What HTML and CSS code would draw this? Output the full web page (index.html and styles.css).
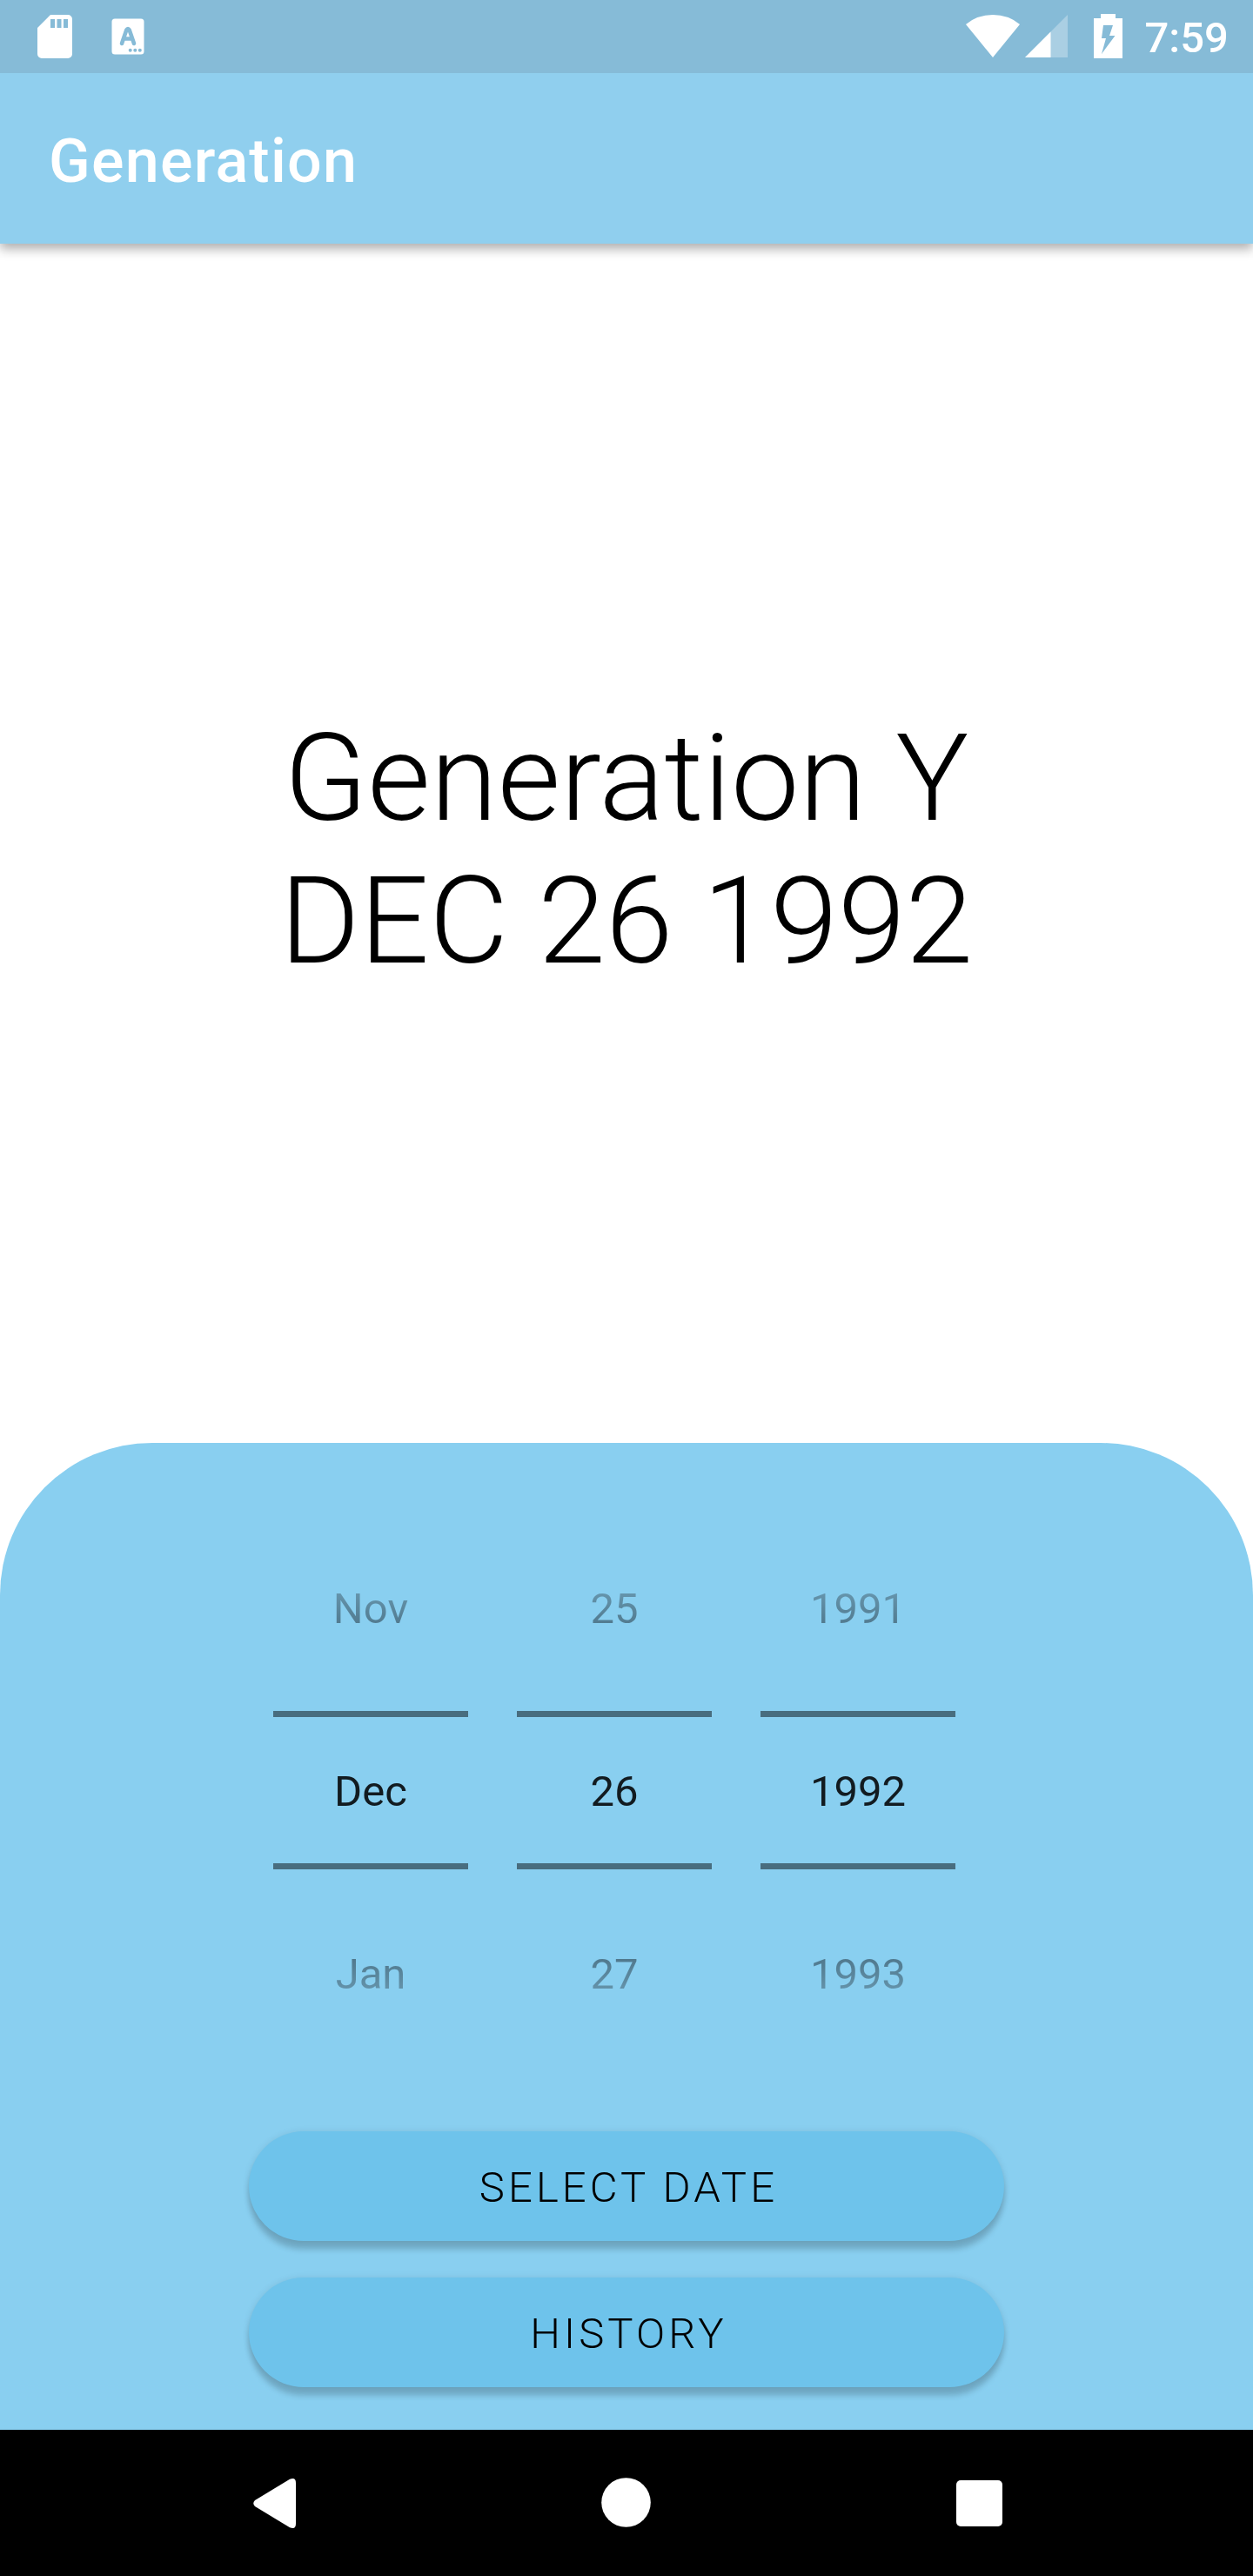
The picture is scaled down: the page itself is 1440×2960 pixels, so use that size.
FILE: index.html
```html
<!DOCTYPE html>
<html lang="en">
<head>
<meta charset="utf-8">
<title>Generation</title>
<link rel="stylesheet" href="styles.css">
</head>
<body>
<div class="screen">
  <header class="top">
    <div class="status">
      <svg class="status-left" width="200" height="84" viewBox="0 0 200 84" fill="#fff">
        <path fill-rule="evenodd" d="M58 17H78a5 5 0 0 1 5 5V62a5 5 0 0 1-5 5H48a5 5 0 0 1-5-5V32ZM58 22V32H63V22ZM65.500 22V32H70.500V22ZM73 22V32H78V22Z"/>
        <rect x="128.500" y="21.500" width="37" height="41" rx="3.500"/>
        <path d="M140 50L145.300 34.500Q147 31.500 148.700 34.500L154 50M142.500 44.500H151.500" fill="none" stroke="#86bbd7" stroke-width="4.600" stroke-linecap="round" stroke-linejoin="round"/>
        <g fill="#86bbd7"><circle cx="149.700" cy="57.700" r="2"/><circle cx="155.300" cy="57.700" r="2"/><circle cx="160.800" cy="57.700" r="2"/></g>
      </svg>
      <svg class="status-right" width="200" height="84" viewBox="1100 0 200 84" fill="#fff">
        <path d="M1110 28Q1123 17 1141 17T1172 28L1141 66Z"/>
        <path d="M1227 17V66H1178Z" opacity=".3"/>
        <path d="M1207.500 36.500V66H1178Z"/>
        <path fill-rule="evenodd" d="M1265 16H1282V21H1290V67H1257V21H1265ZM1268 29L1266 44H1271L1266 62L1281.500 41H1275L1279 29Z"/>
      </svg>
      <span class="clock">7:59</span>
    </div>
    <div class="appbar"><h1 class="title">Generation</h1></div>
  </header>
  <main class="result">
    <p class="result-text">Generation Y<br>DEC 26 1992</p>
  </main>
  <section class="panel">
    <div class="picker">
      <div class="wheel">
        <span class="item before">Nov</span><span class="item current">Dec</span><span class="item after">Jan</span>
      </div>
      <div class="wheel">
        <span class="item before">25</span><span class="item current">26</span><span class="item after">27</span>
      </div>
      <div class="wheel">
        <span class="item before">1991</span><span class="item current">1992</span><span class="item after">1993</span>
      </div>
    </div>
    <div class="actions">
      <button class="btn" type="button">SELECT DATE</button>
      <button class="btn" type="button">HISTORY</button>
    </div>
  </section>
  <nav class="navbar">
    <svg width="1440" height="168" viewBox="0 2792 1440 168" fill="#fff">
      <path d="M293 2873L333 2848.800Q340 2846 340 2853V2900Q340 2907 333 2904.200L293 2880Q289.500 2876.500 293 2873Z"/>
      <circle cx="719.500" cy="2875.500" r="28.300"/>
      <rect x="1099" y="2850" width="53" height="53" rx="5"/>
    </svg>
  </nav>
</div>
</body>
</html>
```
FILE: styles.css
```css
* { box-sizing: border-box; }
body {
  margin: 0;
  background: #fff;
  font-family: Roboto, "Liberation Sans", sans-serif;
}
.screen {
  width: 1440px;
  height: 2960px;
  display: flex;
  flex-direction: column;
  overflow: hidden;
}
.top {
  flex: none;
  background: #90cfee;
  box-shadow: 0 6px 12px rgba(0, 0, 0, .32);
}
.status {
  height: 84px;
  background: #86bbd7;
  display: flex;
  align-items: center;
}
.status-right { margin-left: auto; }
.clock {
  width: 140px;
  padding: 3px 0 0 15.5px;
  font-size: 49px;
  font-weight: 500;
  line-height: 58px;
  color: #fff;
}
.appbar {
  height: 196px;
  padding-left: 56px;
  display: flex;
  align-items: center;
}
.title {
  margin: 5px 0 0;
  font-size: 70px;
  font-weight: 500;
  line-height: 82px;
  letter-spacing: 1.25px;
  color: #fff;
}
.result {
  flex: 1;
  padding-top: 14px;
  display: flex;
  align-items: center;
  justify-content: center;
}
.result-text {
  margin: 0;
  text-align: center;
  font-size: 140px;
  font-weight: 300;
  line-height: 164px;
  color: #000;
}
.panel {
  flex: none;
  height: 1134px;
  padding-top: 84px;
  background: #89cff0;
  border-radius: 175px 175px 0 0;
}
.picker {
  height: 630px;
  padding-left: 314px;
  display: flex;
  gap: 56px;
}
.wheel {
  width: 224px;
  display: flex;
  flex-direction: column;
  align-items: stretch;
}
.item {
  text-align: center;
  font-size: 49px;
  line-height: 58px;
}
.before, .after {
  height: 224px;
  color: transparent;
  background-clip: text;
  -webkit-background-clip: text;
}
.before {
  padding-top: 78px;
  background-image: linear-gradient(#6798b0 84px, #4c7387 134px);
}
.current {
  height: 182px;
  padding-top: 57px;
  border-top: 7px solid #486d7f;
  border-bottom: 7px solid #486d7f;
  color: #121b20;
}
.after {
  padding-top: 92px;
  background-image: linear-gradient(#4c7387 95px, #6798b0 145px);
}
.actions {
  margin-top: 77px;
  display: flex;
  flex-direction: column;
  align-items: center;
  gap: 42px;
}
.btn {
  width: 868px;
  height: 126px;
  padding: 3px 0 0 5px;
  border: 0;
  border-radius: 63px;
  background: #6ec3eb;
  box-shadow: 0 10px 6px rgba(0, 0, 0, .17), 0 1px 8px rgba(0, 0, 0, .1);
  font: 300 49px/58px Roboto, "Liberation Sans", sans-serif;
  letter-spacing: 4.1px;
  color: #000;
}
.navbar {
  flex: none;
  height: 168px;
  background: #000;
}
.navbar svg { display: block; }
```
